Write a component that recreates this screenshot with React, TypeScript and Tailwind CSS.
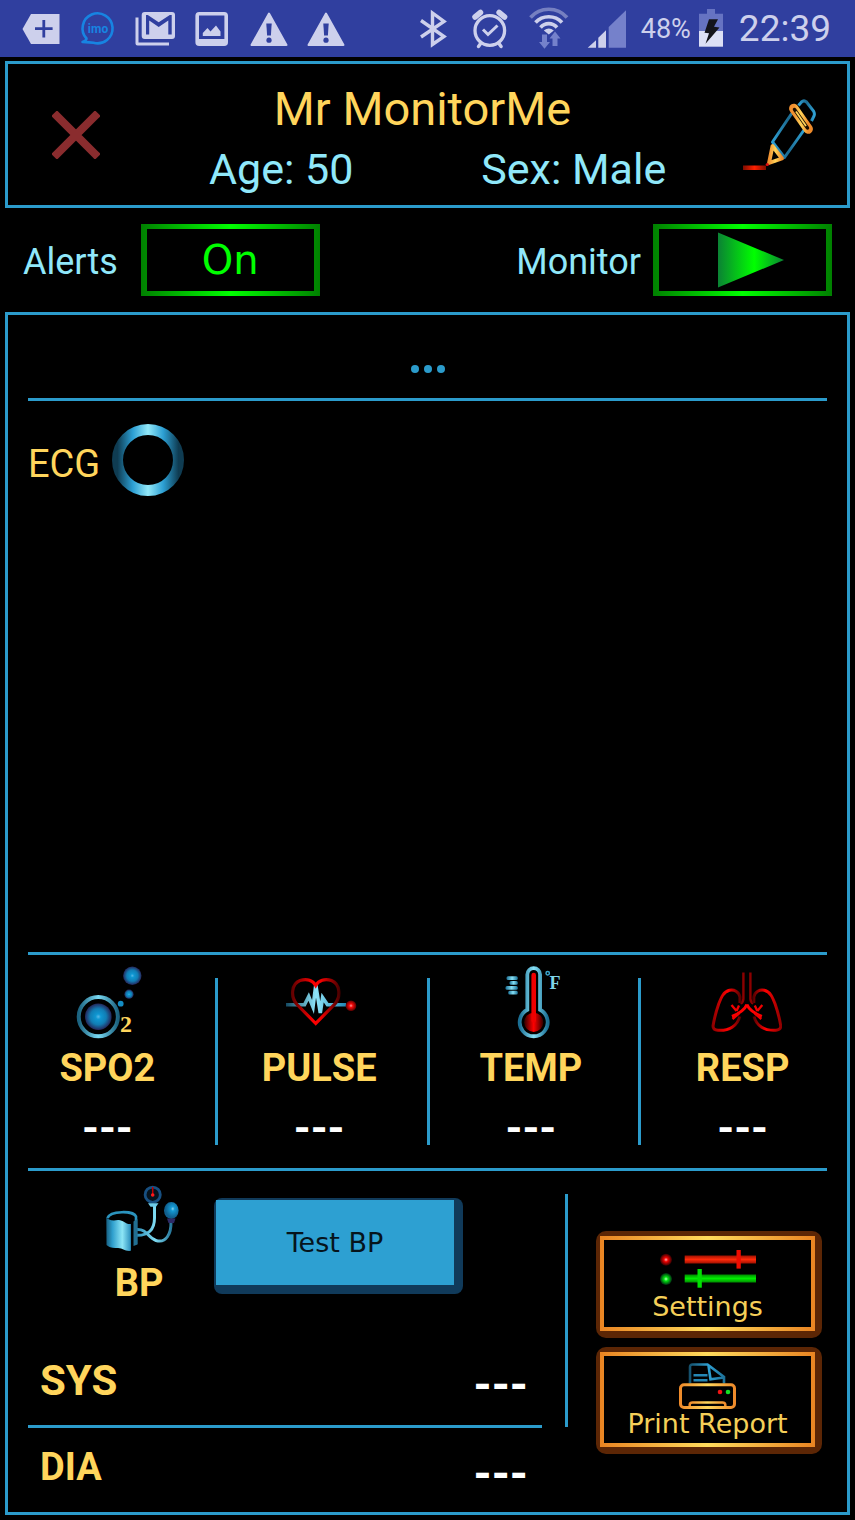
import type { ReactNode } from "react";

/* ---------- status bar icons ---------- */

function StatusIcon({ label, children }: { label: string; children: ReactNode }) {
  return (
    <svg role="img" aria-label={label} width="40" height="40" viewBox="0 0 40 40" className="shrink-0 overflow-visible text-[#cdd0ec]">
      {children}
    </svg>
  );
}

function TagIcon() {
  return (
    <StatusIcon label="Added">
      <path d="M1.5 20 10 5H38.5V35H10Z" fill="currentColor" />
      <path d="M22.8 11v17.5M14 19.7h17.6" stroke="#303f9f" strokeWidth="2.8" />
    </StatusIcon>
  );
}

function ImoIcon() {
  return (
    <StatusIcon label="imo">
      <path d="M8.500 29.500a15 15 0 1 1 7 4.300c-3 -0.800 -5 0 -11 -0.800c3 -1 4 -1.500 4 -3.500z" fill="none" stroke="#1784e2" strokeWidth="2.600" strokeLinejoin="round" />
      <text x="20" y="24" textAnchor="middle" fontFamily="Roboto, sans-serif" fontWeight="700" fontSize="12" fill="#1784e2">imo</text>
    </StatusIcon>
  );
}

function MailIcon() {
  return (
    <StatusIcon label="Mail">
      <path d="M2 8.500V34.500Q2 35 2.500 35H34" fill="none" stroke="currentColor" strokeWidth="3" />
      <rect x="6.700" y="3" width="33.300" height="27" rx="3" fill="currentColor" />
      <path d="M36.700 25.500H33.300V11.500L23.700 18L14.200 11.500V25.500H11V6H12.800L23.700 13.300L34.800 6H36.700Z" fill="#303f9f" />
    </StatusIcon>
  );
}

function PictureIcon() {
  return (
    <StatusIcon label="Picture">
      <rect x="5.200" y="4.700" width="29" height="30.600" rx="2" fill="none" stroke="currentColor" strokeWidth="3.600" />
      <path d="M5 30v5.500h29V30z" fill="currentColor" />
      <path d="M10.800 27v-3l4.700-5 3 3.500 5.500-6 4.500 6V27z" fill="currentColor" />
    </StatusIcon>
  );
}

function WarningIcon() {
  return (
    <StatusIcon label="Warning">
      <path d="M20 4.500L37.500 36H2.500Z" fill="currentColor" stroke="currentColor" strokeWidth="2" strokeLinejoin="round" />
      <path d="M17.300 14.500h5.400l-.8 12h-3.800z" fill="#303f9f" />
      <circle cx="20" cy="31.200" r="2.600" fill="#303f9f" />
    </StatusIcon>
  );
}

function BluetoothIcon() {
  return (
    <StatusIcon label="Bluetooth">
      <path d="M8 11.500L31 27.500L19.500 35.500V4L31 12.500L8 28" fill="none" stroke="currentColor" strokeWidth="3.400" />
    </StatusIcon>
  );
}

function AlarmIcon() {
  return (
    <StatusIcon label="Alarm">
      <circle cx="18.800" cy="21.500" r="14.800" fill="none" stroke="currentColor" strokeWidth="3.300" />
      <path d="M4 8l5.500-4.500M33.600 8l-5.500-4.500" stroke="currentColor" strokeWidth="5.500" strokeLinecap="round" />
      <path d="M10 34l-2.500 3.500M27.600 34l2.500 3.500" stroke="currentColor" strokeWidth="3.400" strokeLinecap="round" />
      <path d="M12 20.500l5 5 9.500-9" fill="none" stroke="currentColor" strokeWidth="3" />
    </StatusIcon>
  );
}

function WifiIcon() {
  return (
    <StatusIcon label="Wi-Fi">
      <g fill="none" stroke="currentColor" strokeWidth="3.600">
        <path d="M1.500 8.500C11 -2.500 28.500 -2.500 38 8.500" opacity=".45" />
        <path d="M6.500 13.500C13.500 5.800 26 5.800 33 13.500" />
        <path d="M11.500 18.500C16 13.300 23.500 13.300 28 18.500" />
      </g>
      <path d="M14.800 21.500q5-3.800 10 0l-5 4z" fill="currentColor" />
      <path d="M13 25.500h5v7.500h3l-5.500 6.700L10 33h3zM23.500 37h5v-7.500h3L26 22.500l-5.500 7h3z" fill="#7581cb" />
    </StatusIcon>
  );
}

function SignalIcon() {
  return (
    <StatusIcon label="Signal">
      <path d="M39 1.300V38.700H21.700V18Z" fill="#7581cb" />
      <path d="M.7 38.700L9 31.300V38.700ZM11.300 38.700V28.700L19 21.300V38.700Z" fill="currentColor" />
    </StatusIcon>
  );
}

function BatteryIcon() {
  return (
    <svg role="img" aria-label="Charging" width="24" height="40" viewBox="0 0 24 40" className="shrink-0">
      <path d="M8 0h8v4.700h8V22H0V4.700h8z" fill="#6673c2" />
      <path d="M0 22h24v15.700H0z" fill="#dcdff5" />
      <path d="M10 10.300h9l-4 7.500 5.500.8L6.500 34.700l3.500-10.400-4.500-.6z" fill="#14141c" />
    </svg>
  );
}

/* ---------- patient header icons ---------- */

function CrossIcon() {
  return (
    <svg width="48" height="48" viewBox="0 0 48 48" aria-hidden="true">
      <path d="M5 5L43 43M43 5L5 43" stroke="#8a2c2e" strokeWidth="8" strokeLinecap="square" />
    </svg>
  );
}

function PencilIcon() {
  return (
    <svg width="74" height="72" viewBox="0 0 74 72" aria-hidden="true">
      <defs>
        <linearGradient id="pen-blue" x1="0" x2="1">
          <stop offset="0" stopColor="#2fa0d3" />
          <stop offset=".5" stopColor="#1c6a90" />
          <stop offset="1" stopColor="#2fa0d3" />
        </linearGradient>
        <linearGradient id="pen-gold" x1="0" x2="1">
          <stop offset="0" stopColor="#f09030" />
          <stop offset=".5" stopColor="#ffd257" />
          <stop offset="1" stopColor="#ee8a2a" />
        </linearGradient>
        <linearGradient id="pen-red" x1="0" x2="1">
          <stop offset="0" stopColor="#7d0d00" />
          <stop offset=".5" stopColor="#ff2000" />
          <stop offset="1" stopColor="#7d0d00" />
        </linearGradient>
      </defs>
      <path d="M49 14L29.500 43L41.500 58.500L61 31" fill="none" stroke="url(#pen-blue)" strokeWidth="3" strokeLinejoin="round" />
      <path d="M55.500 6.500L58.500 3Q61 .8 63.500 3L70.500 12Q72 14.500 71 17L68.500 22" fill="none" stroke="url(#pen-blue)" strokeWidth="3" />
      <path d="M50.800 9.500L65.200 30" stroke="url(#pen-gold)" strokeWidth="9.500" strokeLinecap="round" />
      <path d="M51.500 10.500L64.500 29" stroke="#1a0d00" strokeWidth="3.400" strokeLinecap="round" />
      <path d="M53 12.500L63 27" stroke="#ffd257" strokeWidth="1.800" />
      <path d="M29.500 47L26 64L39 59.500Z" fill="#000" stroke="url(#pen-gold)" strokeWidth="3.800" strokeLinejoin="round" />
      <path d="M0 66.500h23v4.500H0z" fill="url(#pen-red)" />
      <circle cx="24.300" cy="65.500" r="1.600" fill="#e01010" />
    </svg>
  );
}

function PlayIcon() {
  return (
    <svg width="66" height="56" viewBox="0 0 66 56" aria-hidden="true">
      <defs>
        <linearGradient id="play" x1="0" x2="1">
          <stop offset="0" stopColor="#0b8234" />
          <stop offset=".55" stopColor="#00ff00" />
          <stop offset="1" stopColor="#0b8234" />
        </linearGradient>
      </defs>
      <path d="M0 .5L66 28L0 55.500Z" fill="url(#play)" />
    </svg>
  );
}

function RingIcon() {
  return (
    <svg width="72" height="72" viewBox="0 0 72 72" aria-hidden="true">
      <defs>
        <linearGradient id="ring" x1="0" x2="1">
          <stop offset="0" stopColor="#0f3c52" />
          <stop offset=".25" stopColor="#2c9fd3" />
          <stop offset=".5" stopColor="#92e8f8" />
          <stop offset=".75" stopColor="#2c9fd3" />
          <stop offset="1" stopColor="#0f3c52" />
        </linearGradient>
      </defs>
      <circle cx="36" cy="36" r="30.500" fill="none" stroke="url(#ring)" strokeWidth="11" />
    </svg>
  );
}

/* ---------- vital sign icons ---------- */

function OxygenIcon() {
  return (
    <svg width="72" height="73" viewBox="0 0 72 73" aria-hidden="true">
      <defs>
        <radialGradient id="o2-ball">
          <stop offset="0" stopColor="#58b8e6" />
          <stop offset=".2" stopColor="#0f97d2" />
          <stop offset=".6" stopColor="#117db4" />
          <stop offset="1" stopColor="#25265a" />
        </radialGradient>
        <linearGradient id="o2-ring" x1="0" x2="1">
          <stop offset="0" stopColor="#1b627f" />
          <stop offset=".5" stopColor="#79d9f2" />
          <stop offset="1" stopColor="#1b627f" />
        </linearGradient>
      </defs>
      <circle cx="24.300" cy="50.700" r="19.600" fill="none" stroke="url(#o2-ring)" strokeWidth="4" />
      <circle cx="24.300" cy="50.700" r="13.300" fill="url(#o2-ball)" />
      <circle cx="58.300" cy="9.700" r="9.200" fill="url(#o2-ball)" />
      <circle cx="55" cy="28.200" r="4.600" fill="url(#o2-ball)" />
      <circle cx="46.700" cy="37.700" r="2.900" fill="#148dc4" />
      <text x="46" y="65.700" fontFamily="Liberation Serif, serif" fontWeight="700" fontSize="24" fill="#ffd55c">2</text>
    </svg>
  );
}

function PulseIcon() {
  return (
    <svg width="72" height="73" viewBox="0 0 72 73" aria-hidden="true">
      <defs>
        <linearGradient id="heart" gradientUnits="userSpaceOnUse" x1="5" x2="55" y1="0" y2="0">
          <stop offset="0" stopColor="#5a0000" />
          <stop offset=".45" stopColor="#ff0000" />
          <stop offset=".6" stopColor="#f00000" />
          <stop offset="1" stopColor="#3c0000" />
        </linearGradient>
        <linearGradient id="trace" gradientUnits="userSpaceOnUse" x1="0" x2="60" y1="0" y2="0">
          <stop offset="0" stopColor="#144a63" />
          <stop offset=".5" stopColor="#8fe6fa" />
          <stop offset="1" stopColor="#2186b4" />
        </linearGradient>
        <radialGradient id="pulse-dot">
          <stop offset="0" stopColor="#ff9a9a" />
          <stop offset=".35" stopColor="#f40808" />
          <stop offset="1" stopColor="#5a0000" />
        </radialGradient>
      </defs>
      <path d="M0 38.700H18.500L22.700 30.500L27 41L29.800 19L34.300 47L36.600 31.500L41.500 38.700H60" fill="none" stroke="url(#trace)" strokeWidth="3.600" />
      <path d="M29.700 57.500L11 38.500C4 30.500 5.500 18 14 14.600C21 12.200 27 14.500 29.700 19.500C32.400 14.500 39 12.200 45.500 14.600C54 18 55.500 30.500 48.500 38.500Z" fill="none" stroke="url(#heart)" strokeWidth="3.200" />
      <circle cx="65" cy="39.700" r="5.300" fill="url(#pulse-dot)" />
    </svg>
  );
}

function ThermometerIcon() {
  return (
    <svg width="72" height="73" viewBox="0 0 72 73" aria-hidden="true">
      <defs>
        <linearGradient id="thermo" x1="0" x2="1">
          <stop offset="0" stopColor="#1b6f94" />
          <stop offset=".5" stopColor="#86e0f6" />
          <stop offset="1" stopColor="#1b6f94" />
        </linearGradient>
        <linearGradient id="mercury" x1="0" x2="1">
          <stop offset="0" stopColor="#300000" />
          <stop offset=".5" stopColor="#ff0000" />
          <stop offset="1" stopColor="#300000" />
        </linearGradient>
      </defs>
      <path d="M29.300 43.800V8.500a6.400 6.400 0 0 1 12.800 0V43.800A14 14 0 1 1 29.300 43.800Z" fill="#000" stroke="url(#thermo)" strokeWidth="3.800" />
      <circle cx="35.700" cy="56.300" r="9.600" fill="url(#mercury)" />
      <rect x="33.400" y="6.700" width="4.600" height="50" rx="2.300" fill="#f00000" />
      <g fill="url(#thermo)">
        <rect x="8.500" y="10.200" width="11.300" height="3.800" rx="1.500" />
        <rect x="11.500" y="15.100" width="8.300" height="3.700" rx="1.500" />
        <rect x="7.500" y="19.900" width="12.300" height="3.800" rx="1.500" />
        <rect x="10.200" y="24.800" width="9.600" height="3.800" rx="1.500" />
      </g>
      <circle cx="49.700" cy="7.300" r="1.700" fill="none" stroke="#3aa5cf" strokeWidth="1.500" />
      <text x="51.500" y="22.700" fontFamily="Liberation Serif, serif" fontWeight="700" fontSize="18" fill="#7fd4e8">F</text>
    </svg>
  );
}

function LungHalf() {
  return (
    <>
      <path d="M33.400 6.500V33Q33 36.500 30.500 37.500" stroke="#8c0000" strokeWidth="2.400" />
      <path d="M30 37V31C29 25.500 24 23.300 19.500 24.300C13 26 11 32 8.500 38.500C5.500 47 4 54 3 60Q3 64 8 64.300C19 65 27.500 60 29.800 50.500" stroke="url(#lung)" strokeWidth="3" />
      <path d="M36.900 38.500C34.500 44.500 29 47.500 22 50.500" stroke="#ff0000" strokeWidth="3" />
      <path d="M21.500 39L26.500 45M29 39.500L26.500 45M29 47.500L22.500 53" stroke="#f00000" strokeWidth="2.300" />
    </>
  );
}

function LungsIcon() {
  return (
    <svg width="72" height="73" viewBox="0 0 72 73" aria-hidden="true" fill="none">
      <defs>
        <linearGradient id="lung" gradientUnits="userSpaceOnUse" x1="2" x2="31" y1="0" y2="0">
          <stop offset="0" stopColor="#8a0000" />
          <stop offset=".55" stopColor="#ff0000" />
          <stop offset="1" stopColor="#500000" />
        </linearGradient>
      </defs>
      <LungHalf />
      <g transform="translate(73.800 0) scale(-1 1)">
        <LungHalf />
      </g>
    </svg>
  );
}

function BloodPressureIcon() {
  return (
    <svg width="74" height="68" viewBox="0 0 74 68" aria-hidden="true">
      <defs>
        <linearGradient id="cuff" x1="0" x2="1">
          <stop offset="0" stopColor="#165e80" />
          <stop offset=".25" stopColor="#2f9fcd" />
          <stop offset=".65" stopColor="#8de6f6" />
          <stop offset="1" stopColor="#2a8fbd" />
        </linearGradient>
        <linearGradient id="tube" gradientUnits="userSpaceOnUse" x1="31" x2="67" y1="0" y2="0">
          <stop offset="0" stopColor="#2c8db6" />
          <stop offset=".5" stopColor="#7fdcf3" />
          <stop offset="1" stopColor="#1d6c91" />
        </linearGradient>
        <radialGradient id="squeeze" cx=".6" cy=".4">
          <stop offset="0" stopColor="#8fd6f2" />
          <stop offset=".25" stopColor="#149ad4" />
          <stop offset="1" stopColor="#105f8e" />
        </radialGradient>
      </defs>
      <g fill="none" stroke="url(#tube)" strokeWidth="3">
        <path d="M31 50.300C42 50.500 48.500 45 48.500 33V20" />
        <path d="M31 44.500C41 44 42 53 50 55.500C60 58.500 65.500 49 65 36" />
      </g>
      <path d="M1.500 33C4 25.500 28 25.500 30 31.500V59" fill="none" stroke="#2b93bd" strokeWidth="2.600" />
      <path d="M27.500 36.500L31.500 34V59.500L27.500 61Z" fill="#226f92" />
      <path d="M.3 32Q3 36.500 12 35C17 34.500 20 40 24.900 39V65.800C18 66.500 17 62.500 11 63Q4 63.500 .5 60Z" fill="url(#cuff)" />
      <circle cx="46.700" cy="9.700" r="7.600" fill="#06131d" stroke="#174f80" strokeWidth="2.800" />
      <path d="M46.700 2V10" stroke="#c00000" strokeWidth="1.500" />
      <circle cx="46.700" cy="10" r="1.800" fill="#ff1a1a" />
      <path d="M42 18.300h10.500l-2.500 3.500h-5.500z" fill="#6ccbe8" />
      <ellipse cx="65.300" cy="25.500" rx="7.300" ry="8.500" fill="url(#squeeze)" />
      <path d="M61 33.500h8.500l-1.500 4.500h-5.500z" fill="#2e2a66" />
    </svg>
  );
}

/* ---------- action button icons ---------- */

function SlidersIcon() {
  return (
    <svg width="96" height="38" viewBox="0 0 96 38" aria-hidden="true">
      <defs>
        <radialGradient id="led-red">
          <stop offset="0" stopColor="#ffb0b0" />
          <stop offset=".35" stopColor="#f00000" />
          <stop offset="1" stopColor="#300000" />
        </radialGradient>
        <radialGradient id="led-green">
          <stop offset="0" stopColor="#b8ffb8" />
          <stop offset=".35" stopColor="#00e010" />
          <stop offset="1" stopColor="#002a10" />
        </radialGradient>
        <linearGradient id="bar-red" x1="0" x2="0" y1="0" y2="1">
          <stop offset="0" stopColor="#a01000" />
          <stop offset=".5" stopColor="#ff2a0a" />
          <stop offset="1" stopColor="#a01000" />
        </linearGradient>
        <linearGradient id="bar-green" x1="0" x2="0" y1="0" y2="1">
          <stop offset="0" stopColor="#008a00" />
          <stop offset=".5" stopColor="#00ee00" />
          <stop offset="1" stopColor="#008a00" />
        </linearGradient>
      </defs>
      <circle cx="6" cy="9.700" r="6" fill="url(#led-red)" />
      <circle cx="6" cy="29" r="6" fill="url(#led-green)" />
      <rect x="24.700" y="5.500" width="71.300" height="8" fill="url(#bar-red)" />
      <rect x="76.500" y="0" width="4.300" height="18.600" fill="#ee0c00" />
      <rect x="24.700" y="24.500" width="71.300" height="8" fill="url(#bar-green)" />
      <rect x="37.500" y="19" width="4.300" height="18.700" fill="#00e000" />
    </svg>
  );
}

function PrinterIcon() {
  return (
    <svg width="57" height="46" viewBox="0 0 57 46" aria-hidden="true" fill="none">
      <defs>
        <linearGradient id="printer" x1="0" x2="1">
          <stop offset="0" stopColor="#ee8a2a" />
          <stop offset=".5" stopColor="#ffd85c" />
          <stop offset="1" stopColor="#ee8a2a" />
        </linearGradient>
        <linearGradient id="paper" gradientUnits="userSpaceOnUse" x1="9" x2="46" y1="0" y2="0">
          <stop offset="0" stopColor="#134a64" />
          <stop offset=".55" stopColor="#2ea0d2" />
          <stop offset="1" stopColor="#1d6f96" />
        </linearGradient>
      </defs>
      <path d="M11 20.500V4Q11 1.500 13.500 1.500H28.500L45 14V20.500M29.500 2.500L31.500 16.200L45 14.500" stroke="url(#paper)" strokeWidth="2.600" />
      <path d="M14.500 12.300h14M14.500 17.300h14" stroke="#2486b4" strokeWidth="2.600" />
      <rect x="1.500" y="21.800" width="54" height="22.700" rx="3.500" stroke="url(#printer)" strokeWidth="3" />
      <path d="M10.700 43V41.500Q11 39.500 13.500 39.500H43.500Q46 39.500 46.300 41.500V43" stroke="url(#printer)" strokeWidth="2.500" />
      <circle cx="41" cy="29" r="2.300" fill="#f01414" />
      <circle cx="49" cy="29" r="2.300" fill="#14e024" />
    </svg>
  );
}

/* ---------- building blocks ---------- */

const greenFrame =
  "flex h-[72px] w-[179px] bg-[linear-gradient(90deg,#008000,#00ff00_50%,#008000)] px-1.5 py-[5px]";

function Vital({ icon, name, last }: { icon: ReactNode; name: string; last?: boolean }) {
  return (
    <div className="flex">
      <div className="flex flex-1 flex-col items-center pt-[11px] pb-[18px]">
        {icon}
        <h2 className="mt-[7px] pr-1.5 text-[38px] leading-[44px] font-bold text-[#ffd55c]">{name}</h2>
        <p className="mt-4 pr-1.5 text-[43px] leading-[44px] font-bold text-white">---</p>
      </div>
      <div className={last ? "w-[3px]" : "my-[23px] w-[3px] bg-[#2b9bcb]"} />
    </div>
  );
}

function Reading({ name, children }: { name: string; children: ReactNode }) {
  return (
    <div className="flex items-center justify-between pr-3.5 pl-3">
      {children}
      <span className="pt-2 text-[46px] leading-[48px] font-bold text-white" aria-label={name}>---</span>
    </div>
  );
}

function ActionButton({ icon, label, className }: { icon: ReactNode; label: string; className: string }) {
  return (
    <button type="button" className="flex w-[226px] rounded-[10px] bg-[#5c2605] pt-[5px] pr-[7px] pb-[7px] pl-1">
      <span className="flex flex-1 bg-[linear-gradient(90deg,#e98422,#ffdb5c_50%,#e98422)] p-1">
        <span className={className}>
          {icon}
          <span className="font-['DejaVu_Sans',sans-serif] text-[27px] leading-[26px] text-[#f5cf58]">{label}</span>
        </span>
      </span>
    </button>
  );
}

function StatusBar() {
  return (
    <div className="flex h-[57px] items-center justify-between bg-[#303f9f] pr-6 pl-[21px]">
      <div className="flex items-center gap-[17px]">
        <TagIcon />
        <ImoIcon />
        <MailIcon />
        <PictureIcon />
        <WarningIcon />
        <WarningIcon />
      </div>
      <div className="flex items-center text-[#cdd0ec]">
        <div className="flex items-center gap-[18px]">
          <BluetoothIcon />
          <AlarmIcon />
          <WifiIcon />
          <SignalIcon />
        </div>
        <span className="pr-2 pl-3.5 text-[27px] leading-8">48%</span>
        <BatteryIcon />
        <span className="pl-4 text-[37px] leading-10">22:39</span>
      </div>
    </div>
  );
}

export default function App() {
  return (
    <div className="flex min-h-screen flex-col bg-black font-[Roboto,sans-serif]">
      <StatusBar />
      <main className="flex flex-1 flex-col px-[5px] pt-1 pb-[5px]">
        <header className="grid grid-cols-[127px_1fr_127px] items-center border-[3px] border-[#2b9bcb]">
          <button type="button" aria-label="Close" className="justify-self-center pl-2">
            <CrossIcon />
          </button>
          <div className="pt-3.5 pb-[5px] text-center">
            <h1 className="pr-2.5 text-[47px] leading-[61px] text-[#ffd55c]">Mr MonitorMe</h1>
            <div className="grid grid-cols-2 text-[43px] leading-[61px] text-[#90e8fa]">
              <p>Age: 50</p>
              <p>Sex: Male</p>
            </div>
          </div>
          <button type="button" aria-label="Edit patient" className="justify-self-center pr-2">
            <PencilIcon />
          </button>
        </header>

        <div className="flex items-center justify-between px-[18px] py-4 text-[36px] leading-[44px] text-[#90e8fa]">
          <div className="flex items-center gap-[23px]">
            <span id="alerts-label" className="pt-[3px]">Alerts</span>
            <button type="button" aria-describedby="alerts-label" className={greenFrame}>
              <span className="flex flex-1 items-center justify-center bg-black font-['DejaVu_Sans',sans-serif] text-[40px] text-[#00ff00]">On</span>
            </button>
          </div>
          <div className="flex items-center gap-3">
            <span id="monitor-label" className="pt-[3px]">Monitor</span>
            <button type="button" aria-labelledby="monitor-label" className={greenFrame}>
              <span className="flex flex-1 items-center justify-center bg-black pl-4">
                <PlayIcon />
              </span>
            </button>
          </div>
        </div>

        <section className="flex flex-1 flex-col border-[3px] border-[#2b9bcb] px-5">
          <button type="button" aria-label="More" className="flex h-[86px] items-center justify-center gap-[5px] border-b-[3px] border-[#2b9bcb] pt-[25px]">
            <span className="size-2 rounded-full bg-[#2b9bcb]" />
            <span className="size-2 rounded-full bg-[#2b9bcb]" />
            <span className="size-2 rounded-full bg-[#2b9bcb]" />
          </button>

          <div className="min-h-[300px] flex-1 border-b-[3px] border-[#2b9bcb] pt-[23px]">
            <div className="flex items-center gap-3">
              <h2 className="pt-2 text-[38px] leading-[44px] text-[#ffd55c]">ECG</h2>
              <RingIcon />
            </div>
          </div>

          <div className="border-b-[3px] border-[#2b9bcb]">
            <div className="-mr-[26px] -ml-[22px] grid grid-cols-4">
              <Vital icon={<OxygenIcon />} name="SPO2" />
              <Vital icon={<PulseIcon />} name="PULSE" />
              <Vital icon={<ThermometerIcon />} name="TEMP" />
              <Vital icon={<LungsIcon />} name="RESP" last />
            </div>
          </div>

          <div className="flex pr-[5px]">
            <div className="grid flex-1 grid-rows-[166px_88px_3px_84px]">
              <div className="flex items-start">
                <div className="flex w-[186px] flex-col items-center pt-3.5 pl-9">
                  <span className="pl-2">
                    <BloodPressureIcon />
                  </span>
                  <h2 className="mt-2 text-[38px] leading-[44px] font-bold text-[#ffd55c]">BP</h2>
                </div>
                <button type="button" className="mt-[27px] flex h-24 w-[249px] rounded-lg bg-[#103a5a] pt-0.5 pr-[9px] pb-[9px] pl-0.5">
                  <span className="flex flex-1 items-center justify-center self-stretch bg-[#2da0d2] font-['DejaVu_Sans',sans-serif] text-[27px] leading-[26px] text-[#06141c]">
                    Test BP
                  </span>
                </button>
              </div>
              <Reading name="Systolic">
                <h3 className="text-[42px] leading-[48px] font-bold text-[#ffd55c]">SYS</h3>
              </Reading>
              <div className="bg-[#2b9bcb]" />
              <Reading name="Diastolic">
                <h3 className="pb-1.5 text-[38px] leading-[44px] font-bold text-[#ffd55c]">DIA</h3>
              </Reading>
            </div>
            <div className="mt-[23px] mr-7 mb-[85px] ml-[23px] w-[3px] bg-[#2b9bcb]" />
            <div className="flex flex-col gap-[9px] pt-[60px]">
              <ActionButton
                icon={<SlidersIcon />}
                label="Settings"
                className="flex h-[87px] flex-1 flex-col items-center gap-1.5 bg-black pt-2.5"
              />
              <ActionButton
                icon={<PrinterIcon />}
                label="Print Report"
                className="flex h-[87px] flex-1 flex-col items-center gap-0.5 bg-black pt-[7px]"
              />
            </div>
          </div>
        </section>
      </main>
    </div>
  );
}
